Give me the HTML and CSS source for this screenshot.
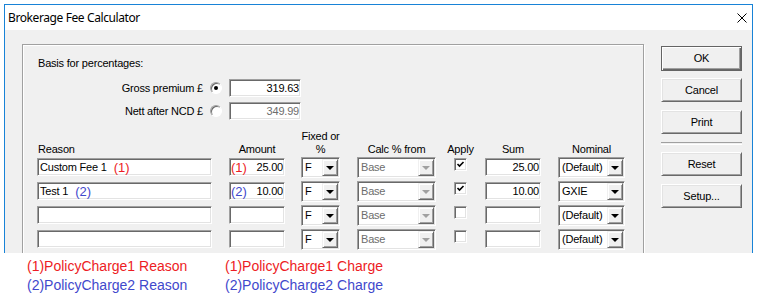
FILE: index.html
```html
<!DOCTYPE html>
<html lang="en">
<head>
<meta charset="UTF-8">
<title>Brokerage Fee Calculator</title>
<link rel="stylesheet" href="styles.css">
</head>
<body>

<div class="window">
  <div class="titlebar">
    <span class="title">Brokerage Fee Calculator</span>
    <svg class="close" width="10" height="10" viewBox="0 0 10 10">
      <path d="M0.5 0.5 L9.5 9.5 M9.5 0.5 L0.5 9.5" stroke="#000" stroke-width="1" fill="none"/>
    </svg>
  </div>

  <div class="client">
    <!-- Group box with basis + fee rows -->
    <div class="group">
      <div class="basis-label">Basis for percentages:</div>

      <div class="basis-row basis-first">
        <span class="basis-name">Gross premium £</span>
        <span class="radio checked"></span>
        <span class="edit num basis-edit">319.63</span>
      </div>
      <div class="basis-row">
        <span class="basis-name">Nett after NCD £</span>
        <span class="radio"></span>
        <span class="edit num basis-edit disabled">349.99</span>
      </div>

      <div class="fee-head">
        <div class="c-reason head-left">Reason</div>
        <div class="c-amount">Amount</div>
        <div class="c-fixed">Fixed or<br>%</div>
        <div class="c-calc">Calc % from</div>
        <div class="c-apply">Apply</div>
        <div class="c-sum">Sum</div>
        <div class="c-nom">Nominal</div>
      </div>

      <div class="fee-row">
        <div class="c-reason edit">Custom Fee 1<span class="tag red">(1)</span></div>
        <div class="c-amount edit split"><span class="tag red first">(1)</span>25.00</div>
        <div class="c-fixed combo"><span class="combo-text">F</span><span class="drop"></span></div>
        <div class="c-calc combo disabled"><span class="combo-text">Base</span><span class="drop"></span></div>
        <div class="c-apply"><span class="check on"><svg width="9" height="9" viewBox="0 0 9 9"><path d="M1.5 4 L3.5 6 L7.5 2" stroke="#000" stroke-width="1.6" fill="none"/></svg></span></div>
        <div class="c-sum edit num">25.00</div>
        <div class="c-nom combo"><span class="combo-text">(Default)</span><span class="drop"></span></div>
      </div>

      <div class="fee-row">
        <div class="c-reason edit">Test 1<span class="tag blue">(2)</span></div>
        <div class="c-amount edit split"><span class="tag blue first">(2)</span>10.00</div>
        <div class="c-fixed combo"><span class="combo-text">F</span><span class="drop"></span></div>
        <div class="c-calc combo disabled"><span class="combo-text">Base</span><span class="drop"></span></div>
        <div class="c-apply"><span class="check on"><svg width="9" height="9" viewBox="0 0 9 9"><path d="M1.5 4 L3.5 6 L7.5 2" stroke="#000" stroke-width="1.6" fill="none"/></svg></span></div>
        <div class="c-sum edit num">10.00</div>
        <div class="c-nom combo"><span class="combo-text">GXIE</span><span class="drop"></span></div>
      </div>

      <div class="fee-row">
        <div class="c-reason edit"></div>
        <div class="c-amount edit"></div>
        <div class="c-fixed combo"><span class="combo-text">F</span><span class="drop"></span></div>
        <div class="c-calc combo disabled"><span class="combo-text">Base</span><span class="drop"></span></div>
        <div class="c-apply"><span class="check"></span></div>
        <div class="c-sum edit num"></div>
        <div class="c-nom combo"><span class="combo-text">(Default)</span><span class="drop"></span></div>
      </div>

      <div class="fee-row">
        <div class="c-reason edit"></div>
        <div class="c-amount edit"></div>
        <div class="c-fixed combo"><span class="combo-text">F</span><span class="drop"></span></div>
        <div class="c-calc combo disabled"><span class="combo-text">Base</span><span class="drop"></span></div>
        <div class="c-apply"><span class="check"></span></div>
        <div class="c-sum edit num"></div>
        <div class="c-nom combo"><span class="combo-text">(Default)</span><span class="drop"></span></div>
      </div>
    </div>

    <!-- Dialog buttons -->
    <div class="buttons">
      <div class="btn default">OK</div>
      <div class="btn">Cancel</div>
      <div class="btn">Print</div>
      <div class="separator"></div>
      <div class="btn">Reset</div>
      <div class="btn">Setup...</div>
    </div>
  </div>
</div>

<div class="notes">
  <div class="note-col">
    <div class="red">(1)PolicyCharge1 Reason</div>
    <div class="blue">(2)PolicyCharge2 Reason</div>
  </div>
  <div class="note-col">
    <div class="red">(1)PolicyCharge1 Charge</div>
    <div class="blue">(2)PolicyCharge2 Charge</div>
  </div>
</div>

</body>
</html>
```

FILE: styles.css
```css
  /* Page */
  body {
    margin: 0;
    background-color: #fff;
    font-family: 'Liberation Sans', Arial, sans-serif;
    font-size: 11px;
    line-height: 13px;
    letter-spacing: -0.2px;
    color: #000;
  }

  /* Window frame */
  .window {
    margin: 4px 0 0 4px;
    width: 749px;
    height: 249px;
    box-sizing: border-box;
    border: 1px solid #1883d7;
    border-bottom: none;
    overflow: hidden;
  }

  .titlebar {
    display: flex;
    align-items: center;
    justify-content: space-between;
    height: 25px;
    padding: 0 5px 0 3px;
    background-color: #fff;
  }

  .title {
    font-family: 'Noto Sans', sans-serif;
    font-size: 12px;
    letter-spacing: -0.4px;
  }

  .close {
    display: block;
  }

  .client {
    display: flex;
    align-items: flex-start;
    height: 223px;
    padding: 14px 0 0 17px;
    background-color: #f0f0f0;
  }

  /* Group box */
  .group {
    width: 622px;
    height: 260px;
    box-sizing: border-box;
    padding: 12px 0 0 14px;
    border: 1px solid #a0a0a0;
    box-shadow: inset 1px 1px 0 #fff, 1px 1px 0 #fff;
  }

  .basis-label {
    margin-left: 1px;
  }

  .basis-row {
    display: flex;
    align-items: center;
    height: 18px;
    margin-top: 5px;
  }

  .basis-row.basis-first {
    margin-top: 9px;
  }

  .basis-name {
    width: 166px;
    text-align: right;
  }

  .basis-edit {
    width: 72px;
    margin-left: 7px;
  }

  /* Radio buttons */
  .radio {
    position: relative;
    width: 12px;
    height: 12px;
    margin-left: 7px;
    box-sizing: border-box;
    border-radius: 50%;
    border: 1px solid;
    border-color: #a0a0a0 #fff #fff #a0a0a0;
    box-shadow: inset 1px 1px 0 #696969;
    background-color: #fff;
  }

  .radio.checked::after {
    content: '';
    position: absolute;
    left: 3px;
    top: 3px;
    width: 4px;
    height: 4px;
    border-radius: 50%;
    background-color: #000;
  }

  /* Sunken edit box */
  .edit {
    display: flex;
    align-items: center;
    height: 18px;
    box-sizing: border-box;
    padding: 0 2px;
    border: 1px solid;
    border-color: #a0a0a0 #fff #fff #a0a0a0;
    box-shadow: inset 1px 1px 0 #696969, inset -1px -1px 0 #e3e3e3;
    background-color: #fff;
    white-space: nowrap;
  }

  .edit.num {
    justify-content: flex-end;
    padding: 0 1px 0 0;
  }

  .edit.split {
    justify-content: space-between;
    padding: 0 1px 0 1px;
  }

  .edit.disabled {
    color: #6d6d6d;
  }

  /* Fee table */
  .fee-head {
    display: flex;
    align-items: flex-end;
    margin-top: 10px;
    height: 26px;
    text-align: center;
  }

  .head-left {
    text-align: left;
    padding-left: 1px;
    box-sizing: border-box;
  }

  .fee-row {
    display: flex;
    align-items: flex-start;
    height: 18px;
    margin-top: 6px;
  }

  .fee-head + .fee-row {
    margin-top: 2px;
  }

  .c-reason { width: 175px; }
  .c-amount { width: 56px; margin-left: 17px; }
  .c-fixed { width: 39px; margin-left: 16px; }
  .c-calc { width: 79px; margin-left: 17px; }
  .c-apply { width: 49px; }
  .c-sum { width: 56px; }
  .c-nom { width: 67px; margin-left: 17px; }

  .c-apply {
    display: flex;
    justify-content: center;
  }

  /* Combo boxes */
  .combo {
    display: flex;
    align-items: center;
    height: 21px;
    margin-top: -1px;
    box-sizing: border-box;
    border: 1px solid;
    border-color: #a0a0a0 #fff #fff #a0a0a0;
    box-shadow: inset 1px 1px 0 #696969, inset -1px -1px 0 #e3e3e3;
    background-color: #fff;
    padding: 1px;
  }

  .combo-text {
    flex: 1;
    padding-left: 2px;
    white-space: nowrap;
    overflow: hidden;
  }

  .drop {
    display: flex;
    align-items: center;
    justify-content: center;
    width: 16px;
    height: 17px;
    box-sizing: border-box;
    border: 1px solid;
    border-color: #f0f0f0 #696969 #696969 #f0f0f0;
    box-shadow: inset 1px 1px 0 #fff, inset -1px -1px 0 #a0a0a0;
    background-color: #f0f0f0;
  }

  .drop::after {
    content: '';
    border-top: 4px solid #000;
    border-left: 4px solid transparent;
    border-right: 4px solid transparent;
  }

  .combo.disabled .combo-text {
    color: #6d6d6d;
  }

  .combo.disabled .drop::after {
    border-top-color: #a0a0a0;
  }

  /* Check boxes */
  .check {
    display: flex;
    align-items: center;
    justify-content: center;
    width: 13px;
    height: 13px;
    box-sizing: border-box;
    border: 1px solid;
    border-color: #a0a0a0 #fff #fff #a0a0a0;
    box-shadow: inset 1px 1px 0 #696969, inset -1px -1px 0 #e3e3e3;
    background-color: #fff;
  }

  .check svg {
    display: block;
  }

  /* Buttons */
  .buttons {
    display: flex;
    flex-direction: column;
    width: 81px;
    margin: 2px 0 0 17px;
  }

  .btn {
    display: flex;
    align-items: center;
    justify-content: center;
    height: 24px;
    margin-bottom: 8px;
    box-sizing: border-box;
    border: 1px solid;
    border-color: #fff #696969 #696969 #fff;
    box-shadow: inset 1px 1px 0 #e3e3e3, inset -1px -1px 0 #a0a0a0;
    background-color: #f0f0f0;
  }

  .btn.default {
    height: 25px;
    margin-bottom: 7px;
    border-color: #646464;
    box-shadow: inset 1px 1px 0 #fff, inset -1px -1px 0 #696969, inset -2px -2px 0 #a0a0a0;
  }

  .separator {
    height: 1px;
    margin-bottom: 7px;
    border-top: 1px solid #a0a0a0;
    border-bottom: 1px solid #fff;
  }

  /* Annotations */
  .tag {
    font-size: 13px;
    letter-spacing: 0;
  }

  .edit > .tag {
    margin-left: 7px;
  }

  .edit > .tag.first {
    margin-left: 0;
  }

  .red {
    color: #ed1c24;
  }

  .blue {
    color: #3f48cc;
  }

  .notes {
    display: flex;
    padding: 4px 0 0 27px;
    font-size: 14px;
    line-height: 19px;
    letter-spacing: 0;
  }

  .note-col {
    width: 198px;
  }
```
